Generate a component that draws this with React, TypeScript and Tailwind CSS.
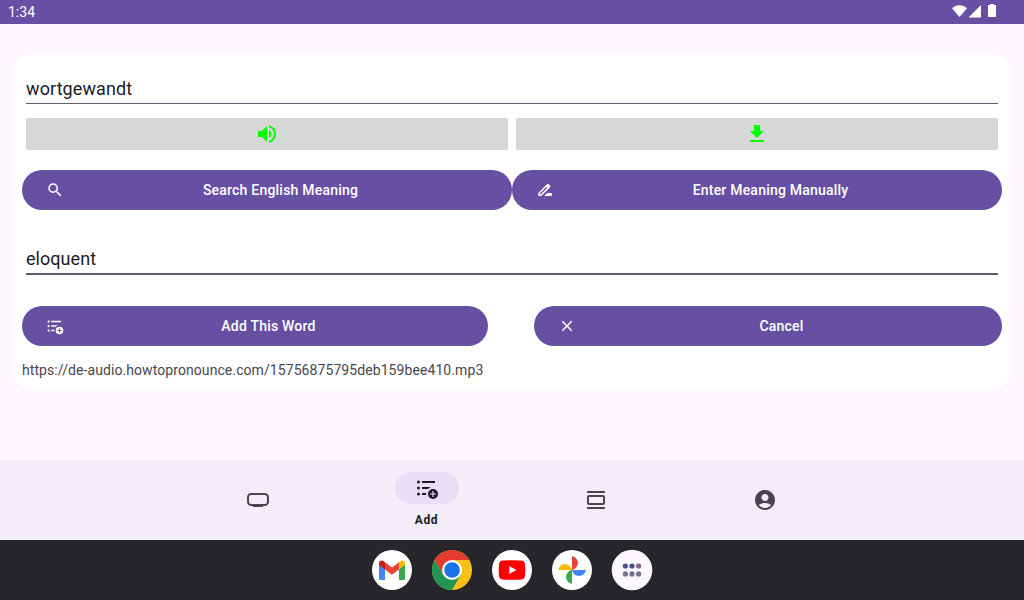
import type { ReactNode } from 'react';

function Icon({ size = 24, className = '', children }: { size?: number; className?: string; children: ReactNode }) {
  return (
    <svg width={size} height={size} viewBox="0 0 24 24" fill="currentColor" className={`block shrink-0 ${className}`}>
      {children}
    </svg>
  );
}

function ListAddIcon({ size, plus }: { size: number; plus: string }) {
  return (
    <Icon size={size}>
      <circle cx="3.5" cy="6" r="1.5" />
      <circle cx="3.5" cy="12" r="1.5" />
      <circle cx="3.5" cy="18" r="1.5" />
      <path d="M7 5h13v2H7zM7 11h9l-1.6.8L13 13H7zM7 17h4.3l-.3 2H7z" />
      <circle cx="18" cy="18" r="5" />
      <path d="M18 15v6M15 18h6" stroke={plus} strokeWidth="1.2" />
    </Icon>
  );
}

function PillButton({ label, icon, className = '' }: { label: string; icon: ReactNode; className?: string }) {
  return (
    <button className={`flex h-10 items-center rounded-full bg-[#6750a4] pl-6 pr-6 text-white ${className}`}>
      {icon}
      <span className="flex-1 pl-[9px] text-center text-[14px] leading-5 font-medium tracking-[0.21px]">{label}</span>
    </button>
  );
}

function StatusBar() {
  return (
    <header className="flex h-6 items-center justify-between bg-[#6750a4] pl-2 pr-7 text-white">
      <span className="text-[14px] leading-6">1:34</span>
      <svg width="45" height="14" viewBox="0 0 45 14" fill="currentColor" className="mb-[2px]">
        <path d="M1 4.200C5 .2 12 .2 16 4.200L8.500 13z" />
        <path d="M30 1V13.500H17.500z" />
        <path d="M37.500 1h1.500V0h4v1h1.500q.5 0 .5.500v10.800q0 .7-.7.700h-6.600q-.7 0-.7-.7V1.500q0-.5.500-.5z" />
      </svg>
    </header>
  );
}

function Navigation() {
  return (
    <nav className="flex h-20 justify-center bg-[#f3edf7] pr-0.5 text-[#49454f]">
      <div className="flex w-[169px] items-center justify-center">
        <Icon>
          <rect x="2" y="6" width="20" height="11" rx="3.200" fill="none" stroke="currentColor" strokeWidth="2" />
          <path d="M7 17h10v2H7z" />
        </Icon>
      </div>
      <div className="flex w-[169px] flex-col items-center pt-3 text-[#1d192b]">
        <div className="flex h-8 w-16 items-center justify-center rounded-full bg-[#e8def8]">
          <ListAddIcon size={24} plus="#e8def8" />
        </div>
        <span className="mt-2 text-[12px] leading-4 font-bold tracking-[0.6px] text-[#1c1b1f]">Add</span>
      </div>
      <div className="flex w-[169px] items-center justify-center">
        <Icon>
          <path d="M3 3h18v2H3zM3 19h18v2H3z" />
          <rect x="4" y="8" width="16" height="8" rx="1" fill="none" stroke="currentColor" strokeWidth="2" />
        </Icon>
      </div>
      <div className="flex w-[169px] items-center justify-center">
        <Icon>
          <path d="M12 2C6.480 2 2 6.480 2 12s4.480 10 10 10 10-4.480 10-10S17.520 2 12 2zm0 4c1.930 0 3.500 1.570 3.500 3.500S13.930 13 12 13s-3.500-1.570-3.500-3.500S10.070 6 12 6zm0 14c-2.030 0-4.430-.820-6.140-2.880C7.550 15.800 9.680 15 12 15s4.450.8 6.140 2.120C16.430 19.180 14.030 20 12 20z" />
        </Icon>
      </div>
    </nav>
  );
}

function Dock() {
  return (
    <footer className="flex h-[60px] items-center justify-center gap-5 bg-[#27262b]">
      <svg width="40" height="40" viewBox="0 0 40 40">
        <circle cx="20" cy="20" r="20" fill="#fff" />
        <path d="M7 14l6 4.500V30H8.500Q7 30 7 28.500z" fill="#4285f4" />
        <path d="M27 18.500l6-4.500v14.500q0 1.500-1.500 1.500H27z" fill="#34a853" />
        <path d="M27 12.200l1.500-1.200C30.500 9.500 33 11 33 13v2l-6 4.500z" fill="#fbbc04" />
        <path d="M13 12.200l7 5.300 7-5.300v7.300l-7 5.200-7-5.200z" fill="#ea4335" />
        <path d="M7 15v-2c0-2 2.500-3.500 4.500-2l1.500 1.200v7.300z" fill="#c5221f" />
      </svg>
      <svg width="40" height="40" viewBox="0 0 40 40">
        <circle cx="20" cy="20" r="20" fill="#fbc116" />
        <path d="M20 20L11.340 25 2.680 10A20 20 0 0 1 37.320 10H20z" fill="#e33b2e" />
        <path d="M2.680 10A20 20 0 0 0 20 40l8.660-15L20 20l-8.660 5z" fill="#219653" />
        <circle cx="20" cy="20" r="10" fill="#fff" />
        <circle cx="20" cy="20" r="7.800" fill="#1a73e8" />
      </svg>
      <svg width="40" height="40" viewBox="0 0 40 40">
        <circle cx="20" cy="20" r="20" fill="#fff" />
        <path d="M11 10.500Q20 9.900 29 10.500 32.500 10.800 33 14q.6 6 0 12-.5 3.200-4 3.500-9 .6-18 0-3.500-.3-4-3.500-.6-6 0-12 .5-3.200 4-3.500z" fill="#f00" />
        <path d="M17.300 16v8l7-4z" fill="#fff" />
      </svg>
      <svg width="40" height="40" viewBox="0 0 40 40">
        <circle cx="20" cy="20" r="20" fill="#fff" />
        <path d="M20 6a7.100 7.100 0 0 1 0 14z" fill="#ea4335" />
        <path d="M34 20a7.100 7.100 0 0 1-14 0z" fill="#4285f4" />
        <path d="M20 34a7.100 7.100 0 0 1 0-14z" fill="#34a853" />
        <path d="M6 20a7.100 7.100 0 0 1 14 0z" fill="#fbbc04" />
      </svg>
      <svg width="40" height="40" viewBox="0 0 40 40" className="overflow-visible">
        <circle cx="20" cy="20" r="20.300" fill="#fdf7ff" />
        <g fill="#74738a">
          <circle cx="13.400" cy="16" r="2.600" fill="#475089" />
          <circle cx="20" cy="16" r="2.600" fill="#475089" />
          <circle cx="26.600" cy="16" r="2.600" fill="#8c6484" />
          <circle cx="13.400" cy="23.900" r="2.600" />
          <circle cx="20" cy="23.900" r="2.600" />
          <circle cx="26.600" cy="23.900" r="2.600" />
        </g>
      </svg>
    </footer>
  );
}

export default function App() {
  return (
    <div className="flex h-[600px] w-[1024px] flex-col overflow-hidden bg-[#fef7ff] font-['Roboto',sans-serif]">
      <StatusBar />
      <main className="flex-1 px-3 pt-[30px]">
        <section className="h-[335px] rounded-[20px] bg-white px-[10px] pt-[21px]">
          <div className="mx-1 h-[29px] border-b border-[#625b71] text-[18px] leading-7 tracking-[0.1px] text-[#1c1b1f]">wortgewandt</div>
          <div className="mx-1 mt-[14px] flex gap-2">
            <button className="flex h-8 flex-1 items-center justify-center rounded-[2px] bg-[#d6d7d7] text-[#00ff00]">
              <Icon>
                <path d="M3 9v6h4l5 5V4L7 9H3zm13.500 3c0-1.770-1.020-3.290-2.500-4.030v8.050c1.480-.730 2.500-2.250 2.500-4.020zM14 3.230v2.060c2.890.860 5 3.540 5 6.710s-2.110 5.850-5 6.710v2.060c4.010-.910 7-4.490 7-8.770s-2.990-7.860-7-8.770z" />
              </Icon>
            </button>
            <button className="flex h-8 flex-1 items-center justify-center rounded-[2px] bg-[#d6d7d7] text-[#00ff00]">
              <Icon>
                <path d="M19 9h-4V3H9v6H5l7 7 7-7zM5 18v2h14v-2H5z" />
              </Icon>
            </button>
          </div>
          <div className="mt-5 flex">
            <PillButton
              className="flex-1"
              label="Search English Meaning"
              icon={
                <Icon size={18}>
                  <path d="M15.500 14h-.790l-.280-.270A6.470 6.470 0 0 0 16 9.500 6.500 6.500 0 1 0 9.500 16c1.610 0 3.090-.590 4.230-1.570l.270.280v.790l5 4.990L20.490 19l-4.990-5zm-6 0C7.010 14 5 11.990 5 9.500S7.010 5 9.500 5 14 7.010 14 9.500 11.990 14 9.500 14z" />
                </Icon>
              }
            />
            <PillButton
              className="flex-1"
              label="Enter Meaning Manually"
              icon={
                <Icon size={18}>
                  <path d="M18.410 5.800 17.200 4.590c-.780-.780-2.050-.780-2.830 0l-2.680 2.680L3 15.960V20h4.040l8.740-8.740 2.630-2.630c.790-.780.790-2.050 0-2.830zM6.210 18H5v-1.210l8.660-8.660 1.210 1.210L6.210 18zM11 20l4-4h6v4H11z" />
                </Icon>
              }
            />
          </div>
          <div className="mx-1 mt-[35px] h-[30px] border-b-2 border-[#625b71] text-[18px] leading-7 tracking-[0.05px] text-[#1c1b1f]">eloquent</div>
          <div className="mt-[31px] flex justify-between">
            <PillButton className="w-[466px]" label="Add This Word" icon={<ListAddIcon size={18} plus="#6750a4" />} />
            <PillButton
              className="w-[468px]"
              label="Cancel"
              icon={
                <Icon size={18}>
                  <path d="M19 6.410 17.590 5 12 10.590 6.410 5 5 6.410 10.590 12 5 17.590 6.410 19 12 13.410 17.590 19 19 17.590 13.410 12z" />
                </Icon>
              }
            />
          </div>
          <p className="mt-[14px] text-[14px] leading-5 tracking-[0.08px] text-[#49454f]">https://de-audio.howtopronounce.com/15756875795deb159bee410.mp3</p>
        </section>
      </main>
      <Navigation />
      <Dock />
    </div>
  );
}
